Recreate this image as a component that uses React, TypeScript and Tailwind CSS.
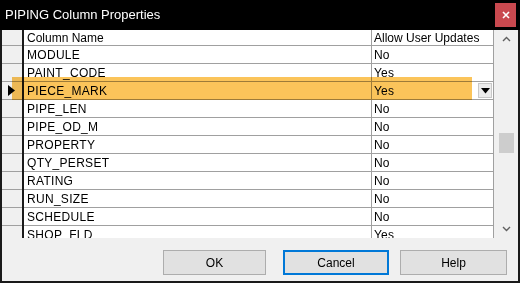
import React from 'react';

type Row = { name: string; allow: string };

const rows: Row[] = [
    { name: 'MODULE', allow: 'No' },
    { name: 'PAINT_CODE', allow: 'Yes' },
    { name: 'PIECE_MARK', allow: 'Yes' },
    { name: 'PIPE_LEN', allow: 'No' },
    { name: 'PIPE_OD_M', allow: 'No' },
    { name: 'PROPERTY', allow: 'No' },
    { name: 'QTY_PERSET', allow: 'No' },
    { name: 'RATING', allow: 'No' },
    { name: 'RUN_SIZE', allow: 'No' },
    { name: 'SCHEDULE', allow: 'No' },
    { name: 'SHOP_FLD', allow: 'Yes' },
];

const ACTIVE = 'PIECE_MARK';

function GridRow({ row }: { row: Row }) {
    const active = row.name === ACTIVE;
    return (
        <div className="flex h-[18px] shrink-0">
            {/* row header */}
            <div className="relative w-[20px] shrink-0 border-b border-[#a0a0a0] bg-[#f0f0f0]">
                {active && (
                    <svg className="absolute left-[6px] top-[3px]" width="7" height="11" viewBox="0 0 7 11">
                        <path d="M0 0 L7 5.5 L0 11 Z" fill="#000" />
                    </svg>
                )}
            </div>
            <div className="w-[2px] shrink-0 bg-[#1a1a1a]" />
            <div className="flex w-[348px] shrink-0 items-center border-b border-r border-[#a0a0a0] bg-white pl-[3px] pt-[1px] text-[12px] tracking-[0.3px] text-black">
                {row.name}
            </div>
            <div className="relative flex w-[122px] shrink-0 items-center border-b border-r border-[#a0a0a0] bg-white pl-[2px] pt-[1px] text-[12px] tracking-[0.2px] text-black">
                {row.allow}
                {active && (
                    <div className="absolute right-[1px] top-[1px] flex h-[15px] w-[14px] items-center justify-center border border-[#c8c8c8] bg-[#ececec]">
                        <svg width="9" height="6" viewBox="0 0 9 6">
                            <path d="M0 0 L9 0 L4.5 5.5 Z" fill="#000" />
                        </svg>
                    </div>
                )}
            </div>
        </div>
    );
}

function Button({ label, focused, className }: { label: string; focused?: boolean; className: string }) {
    return (
        <button
            className={`flex h-[25px] items-center justify-center bg-[#e1e1e1] text-[12px] text-black ${
                focused ? 'border-2 border-[#0078d7]' : 'border border-[#adadad]'
            } ${className}`}
        >
            {label}
        </button>
    );
}

export default function App() {
    return (
        <div
            className="flex h-[283px] w-[520px] flex-col overflow-hidden bg-[#1a1a1a]"
            style={{ fontFamily: '"Liberation Sans", Arial, sans-serif' }}
        >
            {/* Title bar */}
            <div className="flex h-[30px] shrink-0 items-center justify-between bg-black pl-[5px] pr-[4px]">
                <span className="text-[13px] text-white">PIPING Column Properties</span>
                <div className="flex h-[24px] w-[21px] items-center justify-center bg-[#c9494f]">
                    <svg width="8" height="8" viewBox="0 0 8 8">
                        <path d="M1 1 L7 7 M7 1 L1 7" stroke="#fff" strokeWidth="1.6" />
                    </svg>
                </div>
            </div>

            {/* Body */}
            <div className="relative mx-[2px] mb-[2px] flex flex-1 flex-col bg-[#f0f0f0]">
                <div className="flex h-[208px] shrink-0">
                    {/* Grid */}
                    <div className="flex w-[493px] shrink-0 flex-col overflow-hidden">
                        <div className="flex h-[16px] shrink-0">
                            <div className="w-[20px] shrink-0 border-b border-[#a0a0a0] bg-[#f0f0f0]" />
                            <div className="w-[2px] shrink-0 bg-[#1a1a1a]" />
                            <div className="flex w-[348px] shrink-0 items-center border-b border-r border-[#a0a0a0] bg-white pl-[3px] text-[12px] text-black">
                                Column Name
                            </div>
                            <div className="flex w-[122px] shrink-0 items-center border-b border-r border-[#a0a0a0] bg-white pl-[2px] text-[12px] text-black">
                                Allow User Updates
                            </div>
                        </div>
                        {rows.map((r) => (
                            <GridRow key={r.name} row={r} />
                        ))}
                    </div>

                    {/* Scrollbar */}
                    <div className="ml-[2px] flex w-[19px] shrink-0 flex-col items-center bg-[#f0f0f0]">
                        <div className="flex h-[18px] w-full items-center justify-center">
                            <svg width="9" height="6" viewBox="0 0 9 6">
                                <path d="M1 5 L4.5 1.5 L8 5" fill="none" stroke="#606060" strokeWidth="1.4" />
                            </svg>
                        </div>
                        <div className="mt-[85px] h-[20px] w-[15px] bg-[#cdcdcd]" />
                        <div className="flex-1" />
                        <div className="flex h-[18px] w-full items-center justify-center">
                            <svg width="9" height="6" viewBox="0 0 9 6">
                                <path d="M1 1 L4.5 4.5 L8 1" fill="none" stroke="#606060" strokeWidth="1.4" />
                            </svg>
                        </div>
                    </div>
                </div>

                {/* Buttons */}
                <div className="mt-[12px] flex">
                    <Button label="OK" className="ml-[161px] w-[103px]" />
                    <Button label="Cancel" focused className="ml-[17px] w-[106px]" />
                    <Button label="Help" className="ml-[11px] w-[107px]" />
                </div>

                {/* Annotation highlight */}
                <div className="pointer-events-none absolute left-[10px] top-[47px] h-[23px] w-[460px] bg-[#fbc45a] mix-blend-multiply" />
            </div>
        </div>
    );
}
